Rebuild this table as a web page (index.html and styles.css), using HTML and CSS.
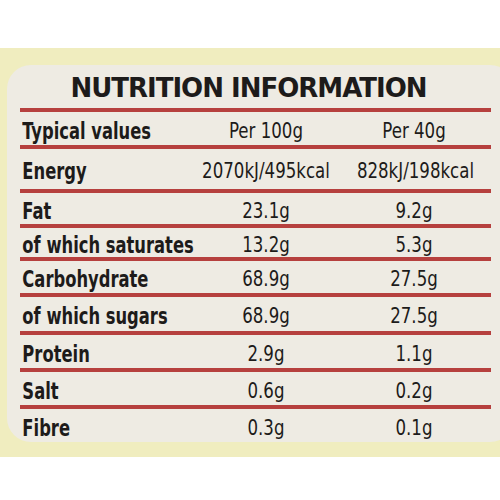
FILE: index.html
```html
<!DOCTYPE html>
<html lang="en">

<head>
    <meta charset="UTF-8">
    <meta name="viewport" content="width=device-width, initial-scale=1.0">
    <link rel="stylesheet" href="styles.css">
    <title>Nutrition Information</title>
</head>

<body>
    <div class="pack">
        <div class="label">
            <h1 class="title">NUTRITION INFORMATION</h1>
            <div class="row head">
                <span class="name">Typical values</span>
                <span class="val">Per 100g</span>
                <span class="val">Per 40g</span>
            </div>
            <div class="row energy">
                <span class="name">Energy</span>
                <span class="val">2070kJ/495kcal</span>
                <span class="val">828kJ/198kcal</span>
            </div>
            <div class="row r35">
                <span class="name">Fat</span>
                <span class="val">23.1g</span>
                <span class="val">9.2g</span>
            </div>
            <div class="row r33">
                <span class="name">of which saturates</span>
                <span class="val">13.2g</span>
                <span class="val">5.3g</span>
            </div>
            <div class="row r36">
                <span class="name">Carbohydrate</span>
                <span class="val">68.9g</span>
                <span class="val">27.5g</span>
            </div>
            <div class="row r38">
                <span class="name">of which sugars</span>
                <span class="val">68.9g</span>
                <span class="val">27.5g</span>
            </div>
            <div class="row r37">
                <span class="name">Protein</span>
                <span class="val">2.9g</span>
                <span class="val">1.1g</span>
            </div>
            <div class="row r37">
                <span class="name">Salt</span>
                <span class="val">0.6g</span>
                <span class="val">0.2g</span>
            </div>
            <div class="row last">
                <span class="name">Fibre</span>
                <span class="val">0.3g</span>
                <span class="val">0.1g</span>
            </div>
        </div>
    </div>
</body>

</html>
```

FILE: styles.css
```css
html,
body {
    margin: 0;
    background-color: #ffffff;
    overflow: hidden;
}

.pack {
    margin-top: 48px;
    height: 409px;
    box-sizing: border-box;
    padding: 17px 0 0 7px;
    background-color: #f0edbf;
}

.label {
    margin-right: -14px;
    height: 377px;
    box-sizing: border-box;
    padding: 0 23px 0 13px;
    background-color: #eeebe3;
    border-radius: 24px;
    color: #1d1b1a;
}

.title {
    margin: 0;
    height: 47px;
    box-sizing: border-box;
    padding: 8px 14px 0 0;
    border-bottom: 4px solid #b6403e;
    text-align: center;
    font-family: "DejaVu Sans", sans-serif;
    font-size: 26px;
    font-weight: bold;
    line-height: 30px;
    letter-spacing: -1px;
}

.row {
    display: grid;
    grid-template-columns: 166px 160px 136px 1fr;
    align-items: center;
    box-sizing: border-box;
    height: 36px;
    padding-top: 4px;
    border-bottom: 4px solid #b6403e;
}

.row.head { height: 37px; }
.row.energy { height: 44px; }
.row.r33 { height: 33px; }
.row.r35 { height: 35px; }
.row.r36 { height: 36px; }
.row.r37 { height: 37px; }
.row.r38 { height: 38px; }

.row.last {
    height: 33px;
    border-bottom: none;
}

.name {
    padding-left: 3px;
    font-family: "DejaVu Sans Condensed", "Liberation Sans Narrow", sans-serif;
    font-size: 23px;
    font-weight: bold;
    line-height: 26px;
    white-space: nowrap;
    transform: scaleX(0.79);
    transform-origin: left center;
}

.val {
    text-align: center;
    font-family: "DejaVu Sans Condensed", "Liberation Sans Narrow", sans-serif;
    font-size: 22px;
    line-height: 26px;
    white-space: nowrap;
    transform: scaleX(0.84);
    transform-origin: center;
}
```
